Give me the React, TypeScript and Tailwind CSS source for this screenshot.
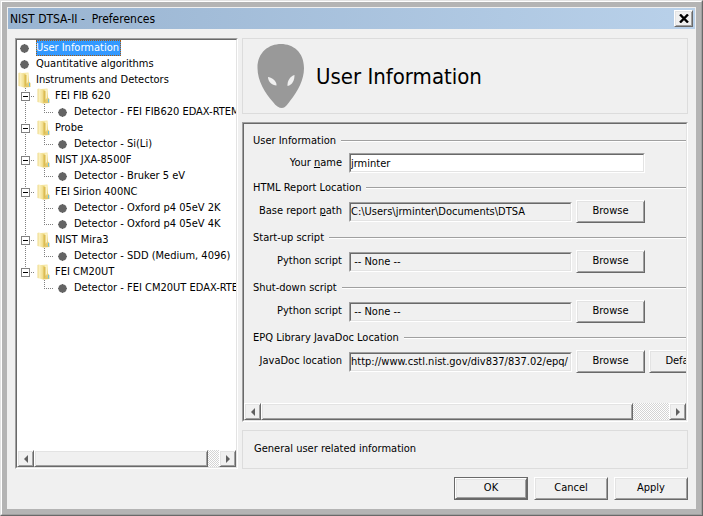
import type { ButtonHTMLAttributes, InputHTMLAttributes, ReactNode } from "react";

const RAISED =
  "bg-[#f0f0f0] border border-t-white border-l-white border-r-[#696969] border-b-[#696969] shadow-[inset_1px_1px_0_#e3e3e3,inset_-1px_-1px_0_#a0a0a0]";
const SUNKEN =
  "border border-t-[#a0a0a0] border-l-[#a0a0a0] border-r-white border-b-white";
const SUNKEN_INNER =
  "border border-t-[#696969] border-l-[#696969] border-r-[#e3e3e3] border-b-[#e3e3e3]";

function Button({ className = "", ...rest }: ButtonHTMLAttributes<HTMLButtonElement>) {
  return <button type="button" className={`${RAISED} shrink-0 ${className}`} {...rest} />;
}

function TextField({ className = "", ...rest }: InputHTMLAttributes<HTMLInputElement>) {
  return (
    <div className={`${SUNKEN} shrink-0 ${className}`}>
      <input
        type="text"
        className={`${SUNKEN_INNER} block h-[18px] w-full min-w-0 bg-transparent outline-none`}
        {...rest}
      />
    </div>
  );
}

function ScrollBar({ label, thumb }: { label: string; thumb: string }) {
  return (
    <div
      role="group"
      aria-label={label}
      className="flex h-[17px] shrink-0 bg-[repeating-conic-gradient(#d4d4d4_0_25%,#ffffff_0_50%)] bg-[length:2px_2px]"
    >
      <Button aria-label="Scroll left" className="flex w-[17px] items-center justify-center">
        <svg width="4" height="8" viewBox="0 0 4 8" fill="#606060">
          <path d="M4 0v8L0 4z" />
        </svg>
      </Button>
      <div className={`${RAISED} ${thumb}`} />
      <div className="flex-1" />
      <Button aria-label="Scroll right" className="flex w-[17px] items-center justify-center">
        <svg width="4" height="8" viewBox="0 0 4 8" fill="#606060">
          <path d="M0 0v8l4-4z" />
        </svg>
      </Button>
    </div>
  );
}

function Bullet() {
  return (
    <svg className="shrink-0" width="9" height="9" viewBox="0 0 9 9" fill="#646464">
      <path d="M3 0.500h3L7.500 1.500 8.500 3v3L7.500 7.500 6 8.500H3L1.500 7.500 0.500 6V3L1.500 1.500z" />
      <path d="M4 0h1v9H4zM0 4h9v1H0z" />
    </svg>
  );
}

function Folder() {
  return (
    <svg className="shrink-0" width="13" height="16" viewBox="0 0 13 16">
      <defs>
        <linearGradient id="folderFront" x1="0" x2="1">
          <stop offset="0" stopColor="#eed98a" />
          <stop offset="0.300" stopColor="#fbf0bc" />
          <stop offset="1" stopColor="#ecd67c" />
        </linearGradient>
        <linearGradient id="folderBack" x1="0" x2="0" y1="0" y2="1">
          <stop offset="0" stopColor="#f6e8a4" />
          <stop offset="1" stopColor="#e2c564" />
        </linearGradient>
      </defs>
      <path d="M4 1L10.500 0.500l0.500 9 1.500 1.500v4L6 15.500z" fill="url(#folderBack)" />
      <path d="M8 1.500h2v8.500l-2 2z" fill="#fbf2c4" />
      <path d="M0.500 1L2 0.500l5 1.500V14.500l-1 1-5.500-1.500z" fill="url(#folderFront)" />
      <path d="M6.500 2.500v12.500l2-2V3z" fill="#dcbc52" />
      <path d="M11.500 11v3.500" stroke="#6fc0de" strokeWidth="1" />
    </svg>
  );
}

/* Trunk cell: the dotted line that joins the instruments, with an optional expander box. */
function Trunk({ expander, line }: { expander?: boolean; line: "full" | "top" | "none" }) {
  return (
    <svg className="shrink-0" width="20" height="16" viewBox="0 0 20 16" shapeRendering="crispEdges">
      {line !== "none" && (
        <path
          d={line === "full" ? "M8.500 0V16" : "M8.500 0V8"}
          stroke="#808080"
          strokeDasharray="1 1"
        />
      )}
      {expander && (
        <g>
          <path d="M14 8.500H18" stroke="#808080" strokeDasharray="1 1" />
          <rect x="4.500" y="4.500" width="8" height="8" fill="#fff" stroke="#808080" />
          <path d="M6 8.500h5" stroke="#000" />
        </g>
      )}
    </svg>
  );
}

function Elbow({ last }: { last: boolean }) {
  return (
    <svg className="shrink-0" width="21" height="16" viewBox="0 0 21 16" shapeRendering="crispEdges">
      <path d={last ? "M7.500 0V9" : "M7.500 0V16"} stroke="#808080" strokeDasharray="1 1" />
      <path d="M7 8.500H17" stroke="#808080" strokeDasharray="1 1" />
    </svg>
  );
}

const INSTRUMENTS = [
  { name: "FEI FIB 620", detectors: ["Detector - FEI FIB620 EDAX-RTEM"] },
  { name: "Probe", detectors: ["Detector - Si(Li)"] },
  { name: "NIST JXA-8500F", detectors: ["Detector - Bruker 5 eV"] },
  { name: "FEI Sirion 400NC", detectors: ["Detector - Oxford p4 05eV 2K", "Detector - Oxford p4 05eV 4K"] },
  { name: "NIST Mira3", detectors: ["Detector - SDD (Medium, 4096)"] },
  { name: "FEI CM20UT", detectors: ["Detector - FEI CM20UT EDAX-RTEM"] },
];

function Tree() {
  return (
    <ul role="tree" aria-label="Preferences" className="flex-1 overflow-hidden whitespace-nowrap leading-4">
      <li role="treeitem" aria-selected="true" className="flex h-4 items-center pl-[3px]">
        <Bullet />
        <span className="ml-[7px] bg-[#3399ff] pr-[2px] text-white outline-1 -outline-offset-1 outline-dotted outline-[#a85a10]">
          User Information
        </span>
      </li>
      <li role="treeitem" className="flex h-4 items-center pl-[3px]">
        <Bullet />
        <span className="ml-[7px]">Quantitative algorithms</span>
      </li>
      <li role="treeitem" aria-expanded="true">
        <div className="flex h-4 items-center pl-px">
          <Folder />
          <span className="ml-[5px]">Instruments and Detectors</span>
        </div>
        <ul role="group">
          {INSTRUMENTS.map((inst, i) => {
            const lastInst = i === INSTRUMENTS.length - 1;
            return (
              <li key={inst.name} role="treeitem" aria-expanded="true">
                <div className="flex h-4 items-center">
                  <Trunk expander line={lastInst ? "top" : "full"} />
                  <Folder />
                  <span className="ml-[5px]">{inst.name}</span>
                </div>
                <ul role="group">
                  {inst.detectors.map((d, j) => (
                    <li key={d} role="treeitem" className="flex h-4 items-center">
                      <Trunk line={lastInst ? "none" : "full"} />
                      <Elbow last={j === inst.detectors.length - 1} />
                      <Bullet />
                      <span className="ml-[7px]">{d}</span>
                    </li>
                  ))}
                </ul>
              </li>
            );
          })}
        </ul>
      </li>
    </ul>
  );
}

function Section({ title, children }: { title: string; children: ReactNode }) {
  return (
    <section className="mb-[7px]">
      <h2 className="mb-1 flex h-4 items-center gap-[5px] whitespace-nowrap leading-4">
        {title}
        <span className="h-[2px] flex-1 border-t border-[#a0a0a0] bg-white" />
      </h2>
      <div className="flex items-center">{children}</div>
    </section>
  );
}

function Label({ htmlFor, children }: { htmlFor: string; children: ReactNode }) {
  return (
    <label htmlFor={htmlFor} className="mr-[7px] w-[89px] shrink-0 whitespace-nowrap text-right">
      {children}
    </label>
  );
}

function Alien() {
  return (
    <svg width="48" height="64" viewBox="0 0 48 64">
      <path
        d="M24 0C36 0 47 8 47 24c0 12-6 23-14 33-3 4-5 7-8 7s-6-2-9-6C8 49 0.500 37 0.500 24 0.500 8 12 0 24 0z"
        fill="#999"
      />
      <path d="M11 33c3 0 9 4 8.500 8.500C15 41 11 38 11 33z" fill="#f0f0f0" />
      <path d="M37.500 31c0 5-2 10-7 11-0.500-5 3-10 7-11z" fill="#f0f0f0" />
    </svg>
  );
}

export default function App() {
  return (
    <div className="flex min-h-screen flex-col border border-t-[#e3e3e3] border-l-[#e3e3e3] border-r-[#696969] border-b-[#696969] bg-[#f0f0f0] font-['DejaVu_Sans_Condensed','DejaVu_Sans',sans-serif] text-[11px] text-black">
      <div className="flex flex-1 flex-col border border-t-white border-l-white border-r-[#a0a0a0] border-b-[#a0a0a0]">
        <div className="flex flex-1 flex-col border-5 border-[#b4b4b4]">
          <header className="mx-px mt-px flex h-[21px] items-center justify-between bg-linear-to-r from-[#99b4d1] to-[#b9d1ea] pr-[2px] pl-[2px]">
            <h1 className="whitespace-pre text-[12px]">NIST DTSA-II -  Preferences</h1>
            <Button aria-label="Close" className="flex h-[17px] w-[19px] items-center justify-center">
              <svg width="10" height="9" viewBox="0 0 10 9" stroke="#000" strokeWidth="2.400">
                <path d="M1 0.500l8 8M9 0.500l-8 8" />
              </svg>
            </Button>
          </header>

          <main className="flex flex-1 gap-1 pt-[9px] pr-2 pl-2">
            <nav className={`${SUNKEN} flex w-[223px] shrink-0`}>
              <div className={`${SUNKEN_INNER} flex min-w-0 flex-1 flex-col bg-white`}>
                <Tree />
                <ScrollBar label="Tree scroll bar" thumb="w-[174px]" />
              </div>
            </nav>

            <div className="flex min-w-0 flex-1 flex-col gap-2">
              <div className="flex h-[76px] shrink-0 items-center gap-[11px] border border-[#dcdcdc] pl-[14px]">
                <Alien />
                <h2 className="text-[22px]">User Information</h2>
              </div>

              <div className={`${SUNKEN} flex flex-1`}>
                <div className={`${SUNKEN_INNER} flex min-w-0 flex-1 flex-col`}>
                  <form className="flex-1 overflow-hidden pt-[9px] pl-[9px]">
                    <Section title="User Information">
                      <Label htmlFor="name">
                        Your <u>n</u>ame
                      </Label>
                      <TextField id="name" defaultValue="jrminter" className="w-[296px] bg-white" />
                    </Section>
                    <Section title="HTML Report Location">
                      <Label htmlFor="report">
                        Base report <u>p</u>ath
                      </Label>
                      <TextField id="report" readOnly value="C:\Users\jrminter\Documents\DTSA" className="w-[223px]" />
                      <Button className="ml-1 h-[23px] w-[69px]">Browse</Button>
                    </Section>
                    <Section title="Start-up script">
                      <Label htmlFor="startup">Python script</Label>
                      <TextField id="startup" readOnly value=" -- None --" className="w-[223px]" />
                      <Button className="ml-1 h-[23px] w-[69px]">Browse</Button>
                    </Section>
                    <Section title="Shut-down script">
                      <Label htmlFor="shutdown">Python script</Label>
                      <TextField id="shutdown" readOnly value=" -- None --" className="w-[223px]" />
                      <Button className="ml-1 h-[23px] w-[69px]">Browse</Button>
                    </Section>
                    <Section title="EPQ Library JavaDoc Location">
                      <Label htmlFor="javadoc">JavaDoc location</Label>
                      <TextField
                        id="javadoc"
                        readOnly
                        value="http://www.cstl.nist.gov/div837/837.02/epq/"
                        className="w-[223px]"
                      />
                      <Button className="ml-1 h-[23px] w-[69px]">Browse</Button>
                      <Button className="ml-1 h-[23px] w-[69px]">Default</Button>
                    </Section>
                  </form>
                  <ScrollBar label="Panel scroll bar" thumb="w-[372px]" />
                </div>
              </div>

              <p className="flex h-[39px] shrink-0 items-center border border-[#dcdcdc] pl-[11px]">
                General user related information
              </p>
            </div>
          </main>

          <footer className="flex justify-end gap-[6px] pt-2 pr-2 pb-[9px]">
            <div className="flex border border-[#696969]">
              <Button className="h-[21px] w-[72px]">OK</Button>
            </div>
            <Button className="h-[23px] w-[74px]">Cancel</Button>
            <Button className="h-[23px] w-[74px]">Apply</Button>
          </footer>
        </div>
      </div>
    </div>
  );
}
